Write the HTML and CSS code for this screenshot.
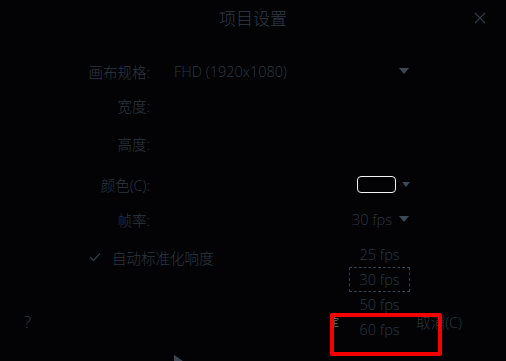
FILE: index.html
```html
<!DOCTYPE html>
<html lang="zh-CN">
<head>
  <meta charset="UTF-8">
  <title>项目设置</title>
  <link rel="stylesheet" href="styles.css">
</head>
<body>
  <div class="dialog">
    <div class="header">
      <span class="title">项目设置</span>
      <span class="close">
        <svg width="12" height="12" viewBox="0 0 12 12"><path d="M1 1L11 11M11 1L1 11" stroke="#2f3b48" stroke-width="1.2"/></svg>
      </span>
    </div>

    <!-- 表单 -->
    <div class="form">
      <div class="row">
        <span class="label">画布规格:</span>
        <div class="value spread">
          <span>FHD (1920x1080)</span>
          <span class="arrow"></span>
        </div>
      </div>
      <div class="row">
        <span class="label">宽度:</span>
      </div>
      <div class="row">
        <span class="label">高度:</span>
      </div>
      <div class="row">
        <span class="label">颜色(C):</span>
        <div class="value end color">
          <span class="swatch"></span>
          <span class="arrow small"></span>
        </div>
      </div>
      <div class="row">
        <span class="label">帧率:</span>
        <div class="value end">
          <span>30 fps</span>
          <span class="arrow"></span>
        </div>
      </div>
      <div class="row check-row">
        <svg class="check" width="12" height="10" viewBox="0 0 12 10"><path d="M1 5L4.5 8.5L11 1.5" fill="none" stroke="#2f3b48" stroke-width="1.3"/></svg>
        <span>自动标准化响度</span>
      </div>
    </div>

    <div class="footer">
      <span class="help">?</span>
      <span class="ok">定</span>
      <span class="cancel">取消(C)</span>
    </div>

    <!-- 帧率下拉列表 -->
    <ul class="fps-list">
      <li>25 fps</li>
      <li class="focused">30 fps</li>
      <li>50 fps</li>
      <li>60 fps</li>
    </ul>

    <div class="mark"></div>
    <div class="cursor"></div>
  </div>
</body>
</html>
```

FILE: styles.css
```css
* {
  margin: 0;
  padding: 0;
  box-sizing: border-box;
}

body {
  background-color: #030305;
  color: #2c3743;
  font-family: 'Open Sans', 'Noto Sans CJK SC', sans-serif;
  font-size: 14.5px;
  font-weight: 300;
  overflow: hidden;
}

.dialog {
  position: relative;
  width: 506px;
  height: 361px;
}

.header {
  position: relative;
  height: 34px;
  display: flex;
  justify-content: center;
  align-items: center;
}

.title {
  font-size: 17px;
  color: #2f3a47;
}

.close {
  position: absolute;
  right: 20px;
  top: 12px;
  display: flex;
}

.form {
  padding-top: 19px;
}

.row {
  display: flex;
  align-items: center;
  height: 36px;
}

.row:nth-child(2) {
  margin-top: -2px;
}

.row:nth-child(3) {
  margin-top: 2px;
}

.row:nth-child(4) {
  margin-top: 5px;
}

.row:nth-child(5) {
  margin-top: -1px;
}

.row:nth-child(6) {
  margin-top: 2px;
}

.label {
  width: 150px;
  text-align: right;
}

.value {
  width: 236px;
  margin-left: 24px;
  display: flex;
  align-items: center;
}

.value.spread {
  justify-content: space-between;
}

.value.end {
  justify-content: flex-end;
  gap: 7px;
}

.value.color {
  gap: 6px;
}

.arrow {
  width: 0;
  height: 0;
  border-left: 5px solid transparent;
  border-right: 5px solid transparent;
  border-top: 6px solid #3a4958;
  margin-right: 1px;
}

.arrow.small {
  border-left-width: 4px;
  border-right-width: 4px;
  border-top-width: 5px;
  margin-right: 0;
}

.swatch {
  width: 39px;
  height: 17px;
  border: 1.5px solid #f2f2f2;
  border-radius: 4px;
  background-color: #030305;
}

.check-row {
  padding-left: 89px;
  gap: 11px;
}

.footer {
  display: flex;
  align-items: center;
  height: 30px;
  margin-top: 31px;
  padding-left: 24px;
}

.help {
  font-size: 17px;
  color: #313c49;
}

.ok {
  margin-left: 298px;
  font-size: 10px;
  color: #9a9a80;
}

.cancel {
  margin-left: 77px;
}

.fps-list {
  position: absolute;
  left: 349px;
  top: 242px;
  width: 61px;
  list-style: none;
  background-color: #030305;
}

.fps-list li {
  height: 25px;
  display: flex;
  justify-content: center;
  align-items: center;
  border: 1px solid transparent;
}

.fps-list li.focused {
  border: 1px dashed #33404e;
}

.mark {
  position: absolute;
  left: 330px;
  top: 313px;
  width: 112px;
  height: 43px;
  border: 4px solid #f50000;
  border-radius: 2px;
}

.cursor {
  position: absolute;
  left: 174px;
  top: 355px;
  width: 0;
  height: 0;
  border-left: 9px solid #3c4650;
  border-top: 6px solid transparent;
}
```
